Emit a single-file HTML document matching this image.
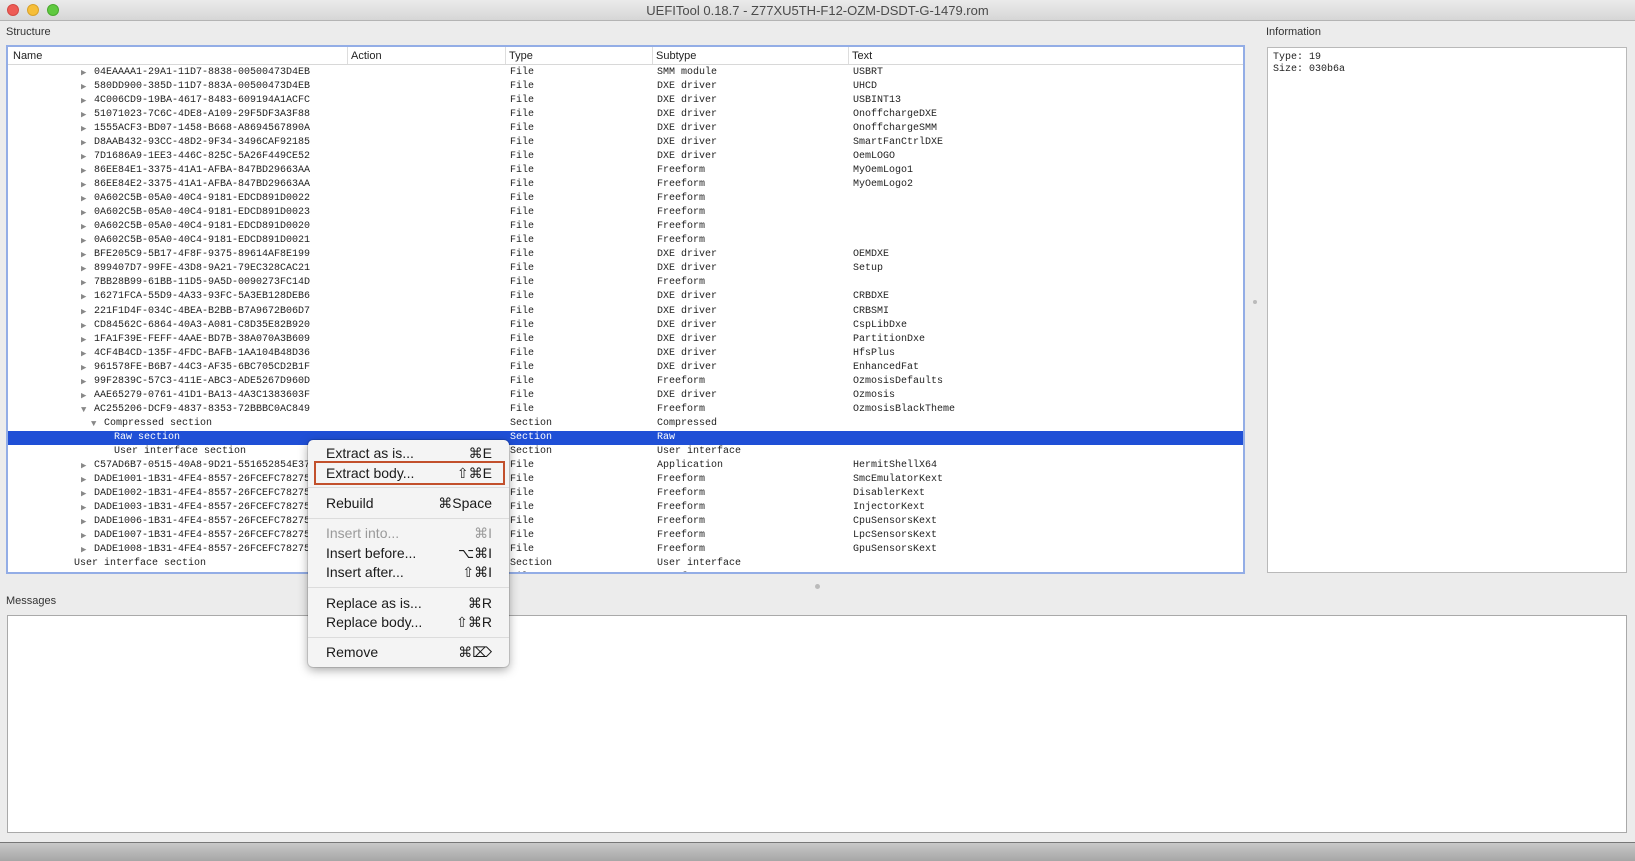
<!DOCTYPE html>
<html><head><meta charset="utf-8"><style>
*{margin:0;padding:0;box-sizing:border-box}
body{width:1635px;height:861px;background:#ececec;position:relative;overflow:hidden;font-family:"Liberation Sans",sans-serif;font-size:11px;color:#222}
.abs{position:absolute}
#title{left:0;top:0;width:1635px;height:21px;background:linear-gradient(#ebebeb,#d6d6d6);border-bottom:1px solid #b4b4b4;text-align:center;font-size:13px;line-height:21px;color:#4a4a4a}
.tl{width:12px;height:12px;border-radius:50%;top:4px}
.lbl{font-size:11px;color:#333}
#tree{left:6px;top:45px;width:1239px;height:529px;border:2px solid #93ade6;background:#fff;overflow:hidden}
#hdr{position:absolute;left:0;top:0;width:100%;height:18px;border-bottom:1px solid #d8d8d8;background:#fff;z-index:2}
#hdr span{position:absolute;top:3px;font-size:11px;color:#222}
#hdr i{position:absolute;top:0;width:1px;height:17px;background:#ddd}
.row{position:absolute;left:0;width:100%;height:14px;font-family:"Liberation Mono",monospace;font-size:10px;line-height:14px;color:#222;white-space:nowrap}
.row span{position:absolute;top:0}
.sel{background:#1f4fd6;color:#fff}
.tri{color:#888;font-size:9px}
.sel .tri{color:#fff}
#info{left:1267px;top:47px;width:360px;height:526px;background:#fff;border:1px solid #b9b9b9;font-family:"Liberation Mono",monospace;font-size:10px;line-height:12px;padding:4px 5px}
#msg{left:7px;top:615px;width:1620px;height:218px;background:#fff;border:1px solid #a9a9a9}
#status{left:0;top:842px;width:1635px;height:19px;background:linear-gradient(#c9c9c9,#a6a6a6);border-top:1px solid #777}
#menu{left:308px;top:440px;width:201px;height:227px;background:#f4f4f4;border-radius:5px;box-shadow:0 3px 10px rgba(0,0,0,.35),0 0 0 1px rgba(0,0,0,.12)}
.mi{position:absolute;left:18px;right:17px;height:18px;font-size:14px;line-height:18px;color:#1a1a1a}
.mi b{position:absolute;right:0;top:0;font-weight:normal}
.dis{color:#9a9a9a}
.sep{position:absolute;left:0;right:0;height:1px;background:#dcdcdc}
#hl{position:absolute;left:6px;top:21px;width:191px;height:24px;border:2px solid #c2502c}
</style></head><body>
<div id="title" class="abs">UEFITool 0.18.7 - Z77XU5TH-F12-OZM-DSDT-G-1479.rom</div>
<div class="abs tl" style="left:7px;background:#ee5b55;border:1px solid #d34a44"></div>
<div class="abs tl" style="left:27px;background:#f6be38;border:1px solid #d9a22a"></div>
<div class="abs tl" style="left:47px;background:#5fc93f;border:1px solid #4aa92f"></div>
<div class="abs lbl" style="left:6px;top:26px">Structure</div>
<div class="abs lbl" style="left:1266px;top:26px">Information</div>
<div class="abs lbl" style="left:6px;top:595px">Messages</div>
<div id="tree" class="abs">
<div id="hdr"><span style="left:5px">Name</span><i style="left:339px"></i><span style="left:343px">Action</span><i style="left:497px"></i><span style="left:501px">Type</span><i style="left:644px"></i><span style="left:648px">Subtype</span><i style="left:840px"></i><span style="left:844px">Text</span></div>
<div id="rows" style="position:absolute;left:-7px;top:19px;width:1260px"></div>
</div>
<div id="info" class="abs">Type: 19<br>Size: 030b6a</div>
<div class="abs" style="left:1253px;top:300px;width:4px;height:4px;border-radius:50%;background:#bbb"></div>
<div class="abs" style="left:815px;top:584px;width:5px;height:5px;border-radius:50%;background:#bbb"></div>
<div id="msg" class="abs"></div>
<div id="status" class="abs"></div>
<div id="menu" class="abs">
<div class="mi" style="top:4px">Extract as is...<b>⌘E</b></div>
<div class="mi" style="top:24px">Extract body...<b>⇧⌘E</b></div>
<div id="hl"></div>
<div class="sep" style="top:47px"></div>
<div class="mi" style="top:54px">Rebuild<b>⌘Space</b></div>
<div class="sep" style="top:78px"></div>
<div class="mi dis" style="top:84px">Insert into...<b>⌘I</b></div>
<div class="mi" style="top:104px">Insert before...<b>⌥⌘I</b></div>
<div class="mi" style="top:123px">Insert after...<b>⇧⌘I</b></div>
<div class="sep" style="top:147px"></div>
<div class="mi" style="top:154px">Replace as is...<b>⌘R</b></div>
<div class="mi" style="top:173px">Replace body...<b>⇧⌘R</b></div>
<div class="sep" style="top:197px"></div>
<div class="mi" style="top:203px">Remove<b>⌘⌦</b></div>
</div>
<script>
var D=[
["t","04EAAAA1-29A1-11D7-8838-00500473D4EB","File","SMM module","USBRT"],
["t","580DD900-385D-11D7-883A-00500473D4EB","File","DXE driver","UHCD"],
["t","4C006CD9-19BA-4617-8483-609194A1ACFC","File","DXE driver","USBINT13"],
["t","51071023-7C6C-4DE8-A109-29F5DF3A3F88","File","DXE driver","OnoffchargeDXE"],
["t","1555ACF3-BD07-1458-B668-A8694567890A","File","DXE driver","OnoffchargeSMM"],
["t","D8AAB432-93CC-48D2-9F34-3496CAF92185","File","DXE driver","SmartFanCtrlDXE"],
["t","7D1686A9-1EE3-446C-825C-5A26F449CE52","File","DXE driver","OemLOGO"],
["t","86EE84E1-3375-41A1-AFBA-847BD29663AA","File","Freeform","MyOemLogo1"],
["t","86EE84E2-3375-41A1-AFBA-847BD29663AA","File","Freeform","MyOemLogo2"],
["t","0A602C5B-05A0-40C4-9181-EDCD891D0022","File","Freeform",""],
["t","0A602C5B-05A0-40C4-9181-EDCD891D0023","File","Freeform",""],
["t","0A602C5B-05A0-40C4-9181-EDCD891D0020","File","Freeform",""],
["t","0A602C5B-05A0-40C4-9181-EDCD891D0021","File","Freeform",""],
["t","BFE205C9-5B17-4F8F-9375-89614AF8E199","File","DXE driver","OEMDXE"],
["t","899407D7-99FE-43D8-9A21-79EC328CAC21","File","DXE driver","Setup"],
["t","7BB28B99-61BB-11D5-9A5D-0090273FC14D","File","Freeform",""],
["t","16271FCA-55D9-4A33-93FC-5A3EB128DEB6","File","DXE driver","CRBDXE"],
["t","221F1D4F-034C-4BEA-B2BB-B7A9672B06D7","File","DXE driver","CRBSMI"],
["t","CD84562C-6864-40A3-A081-C8D35E82B920","File","DXE driver","CspLibDxe"],
["t","1FA1F39E-FEFF-4AAE-BD7B-38A070A3B609","File","DXE driver","PartitionDxe"],
["t","4CF4B4CD-135F-4FDC-BAFB-1AA104B48D36","File","DXE driver","HfsPlus"],
["t","961578FE-B6B7-44C3-AF35-6BC705CD2B1F","File","DXE driver","EnhancedFat"],
["t","99F2839C-57C3-411E-ABC3-ADE5267D960D","File","Freeform","OzmosisDefaults"],
["t","AAE65279-0761-41D1-BA13-4A3C1383603F","File","DXE driver","Ozmosis"],
["d","AC255206-DCF9-4837-8353-72BBBC0AC849","File","Freeform","OzmosisBlackTheme"],
["d2","Compressed section","Section","Compressed",""],
["s","Raw section","Section","Raw",""],
["n3","User interface section","Section","User interface",""],
["t","C57AD6B7-0515-40A8-9D21-551652854E37","File","Application","HermitShellX64"],
["t","DADE1001-1B31-4FE4-8557-26FCEFC78275","File","Freeform","SmcEmulatorKext"],
["t","DADE1002-1B31-4FE4-8557-26FCEFC78275","File","Freeform","DisablerKext"],
["t","DADE1003-1B31-4FE4-8557-26FCEFC78275","File","Freeform","InjectorKext"],
["t","DADE1006-1B31-4FE4-8557-26FCEFC78275","File","Freeform","CpuSensorsKext"],
["t","DADE1007-1B31-4FE4-8557-26FCEFC78275","File","Freeform","LpcSensorsKext"],
["t","DADE1008-1B31-4FE4-8557-26FCEFC78275","File","Freeform","GpuSensorsKext"],
["n1","User interface section","Section","User interface",""],
["p","4F1C52D3-D824-4D2A-A2F0-EC40C23C5916","File","Freeform",""]
];
var h="";
D.forEach(function(r,i){
 var k=r[0],cls="row"+(k=="s"?" sel":""),name="";
 if(k=="t")name='<span class="tri" style="left:80px">&#9654;</span><span style="left:93px">'+r[1]+'</span>';
 else if(k=="d")name='<span class="tri" style="left:80px">&#9660;</span><span style="left:93px">'+r[1]+'</span>';
 else if(k=="d2")name='<span class="tri" style="left:90px">&#9660;</span><span style="left:103px">'+r[1]+'</span>';
 else if(k=="s"||k=="n3")name='<span style="left:113px">'+r[1]+'</span>';
 else if(k=="n1")name='<span style="left:73px">'+r[1]+'</span>';
 else if(k=="p")name='<span style="left:54px">'+r[1]+'</span>';
 h+='<div class="'+cls+'" style="top:'+(i*14.03).toFixed(2)+'px">'+name+'<span style="left:509px">'+r[2]+'</span><span style="left:656px">'+r[3]+'</span><span style="left:852px">'+r[4]+'</span></div>';
});
document.getElementById("rows").innerHTML=h;
</script>
</body></html>
